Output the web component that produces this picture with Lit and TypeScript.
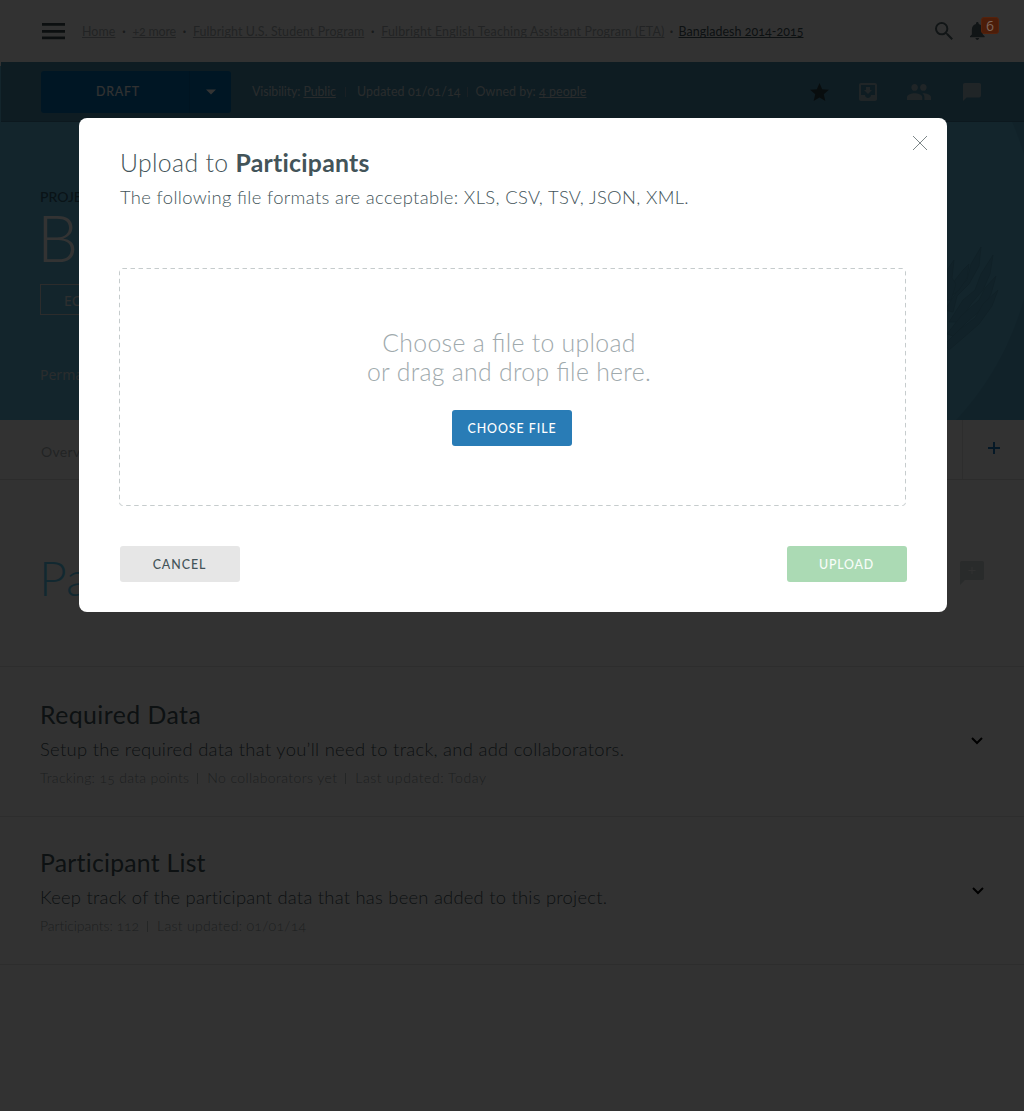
import { LitElement, html, css, svg } from "lit";
import { customElement } from "lit/decorators.js";

interface Crumb { label: string; cls: string; }
interface Section { title: string; titleCls: string; text: string; textCls: string; meta: string[]; cls: string; }

const crumbs: Crumb[] = [
  { label: "Home", cls: "c1" },
  { label: "+2 more", cls: "c2" },
  { label: "Fulbright U.S. Student Program", cls: "c3" },
  { label: "Fulbright English Teaching Assistant Program (ETA)", cls: "c4" },
  { label: "Bangladesh 2014-2015", cls: "c5" },
];

const sections: Section[] = [
  {
    title: "Required Data", titleCls: "t1",
    text: "Setup the required data that you’ll need to track, and add collaborators.", textCls: "d1",
    meta: ["Tracking: 15 data points", "No collaborators yet", "Last updated: Today"], cls: "required",
  },
  {
    title: "Participant List", titleCls: "t2",
    text: "Keep track of the participant data that has been added to this project.", textCls: "d2",
    meta: ["Participants: 112", "Last updated: 01/01/14"], cls: "list",
  },
];

const feathers = [
  "M0 60 L14 38 L22 30 L26 14 L36 -3 L34 16 L24 34 L12 46 L8 62Z",
  "M4 72 L18 50 L30 40 L36 24 L48 5 L45 24 L38 40 L26 54 L14 72Z",
  "M2 84 L16 66 L34 50 L40 38 L51 26 L46 44 L38 58 L22 72 L8 86Z",
  "M0 94 L14 80 L30 68 L38 54 L53 40 L47 56 L34 74 L18 88 L4 100Z",
  "M4 48 L10 30 L18 20 L24 14 L22 28 L14 40Z",
  "M0 50 L2 20 L9 10 L7 28 L11 34 L6 50Z",
];

@customElement("app-root")
export class AppRoot extends LitElement {
  static styles = css`
    :host { display: block; }
    * { box-sizing: border-box; }
    .page {
      position: relative; width: 1024px; height: 1111px; overflow: hidden; background: #fbfbfb;
      font-family: Lato, "Liberation Sans", sans-serif; font-variant-numeric: oldstyle-nums;
      color: #435459; white-space: nowrap;
    }
    svg { display: block; }
    .header { height: 62px; display: flex; align-items: center; padding: 0 26px 0 42px; }
    .crumbs { display: flex; align-items: center; margin-left: 17px; height: 18px; font-size: 12.4px; line-height: 18px; color: #a8b0b2; padding-top: 1px; flex: 1; }
    .crumb { text-decoration: underline; text-decoration-skip-ink: none; text-underline-offset: 1px; }
    .dot { width: 17px; text-align: center; color: #7c8689; font-weight: 700; }
    .dot.last { width: 14px; }
    .c1 { letter-spacing: .1px; } .c2 { letter-spacing: -.16px; } .c3 { letter-spacing: .12px; }
    .c4 { letter-spacing: .195px; } .c5 { letter-spacing: .07px; color: #435459; }
    .tools { display: flex; align-items: center; gap: 17px; }
    .bell { margin-right: 1px; }

    .bar { height: 60px; margin-left: 1px; background: #468caa; border-bottom: 1px solid #3c7896; display: flex; align-items: center; padding: 0 43px 0 40px; color: #f2f5f6; }
    .barwrap { background: linear-gradient(#fbfbfb 4px, #5fb9dc 4px); }
    .draft { width: 190px; height: 42px; border-radius: 3px; background: #006eb4; display: flex; align-items: center; font-size: 12.4px; font-weight: 500; letter-spacing: .8px; }
    .draft-label { width: 149px; height: 42px; line-height: 42px; padding-left: 6px; text-align: center; border-right: 1px solid #0064a5; }
    .draft-arrow { margin-left: 16px; }
    .facts { display: flex; align-items: center; margin-left: 21px; font-size: 12.4px; line-height: 18px; flex: 1; color: #ccd8dc; }
    .facts u { text-decoration-skip-ink: none; text-underline-offset: 1px; }
    .tick { width: 1px; height: 10px; background: #9ab; margin: 0 11px 0 9px; opacity: .7; }
    .tick.b { margin: 0 8px 0 6px; }
    .f1 { letter-spacing: -.1px; } .f2 { letter-spacing: .15px; } .f3 { letter-spacing: .08px; }
    .baricons { display: flex; align-items: center; }
    .baricons .inbox { margin-left: 30px; } .baricons .people { margin-left: 30px; } .baricons .chat { margin-left: 32px; }

    .hero { position: relative; height: 298px; background: #5fb9dc; padding: 67px 40px 0; color: #fff; }
    .decor { position: absolute; right: 0; top: 0; }
    .kicker { font-size: 14px; font-weight: 500; line-height: 16px; color: #2f6074; }
    .name { font-size: 65px; font-weight: 300; line-height: 60px; margin-left: -3px; margin-top: 2px; }
    .tag { width: 120px; height: 31px; margin-top: 17px; border: 1px solid #dcdcdc; padding-left: 23px; font: 400 14px/31px "Noto Sans", sans-serif; color: #e4eaec; }
    .perma { margin-top: 50px; font: 400 14px/20px "Noto Sans", sans-serif; color: #d0dce0; }

    .tabs { height: 60px; border-bottom: 1px solid #dcdcdc; display: flex; padding-left: 41px; font-size: 14px; color: #a9b1b4; letter-spacing: .3px; }
    .tab { flex: 1; line-height: 64px; }
    .add { width: 62px; border-left: 1px solid #e0e0e0; padding: 22px 0 0 25px; }

    .title { height: 187px; border-bottom: 1px solid #dedede; display: flex; justify-content: space-between; padding: 73px 40px 0 39px; }
    .title-text { font-size: 48px; font-weight: 300; line-height: 50px; color: #5cc8f0; }
    .note { margin-top: 8px; }

    .section { display: flex; justify-content: space-between; border-bottom: 1px solid #dedede; padding-left: 40px; }
    .required { height: 150px; padding-top: 33px; padding-right: 41px; }
    .list { height: 148px; padding-top: 31px; padding-right: 40px; }
    .h { font-size: 24.8px; font-weight: 400; line-height: 30px; }
    .t1 { letter-spacing: .46px; } .t2 { letter-spacing: .24px; }
    .p { font-size: 18.4px; font-weight: 300; line-height: 24px; margin-top: 7px; }
    .d1 { letter-spacing: .3px; } .d2 { letter-spacing: .24px; }
    .m { display: flex; align-items: center; margin-top: 7px; font-size: 14px; font-weight: 300; line-height: 20px; color: #8f999c; letter-spacing: .3px; }
    .m .pipe { width: 1px; height: 11px; background: #b4bcbe; margin: 0 9px 0 8px; }
    .m span:nth-of-type(2) { letter-spacing: .4px; } .m span:nth-of-type(3) { letter-spacing: .57px; }
    .list .m span:nth-of-type(1) { letter-spacing: -.05px; } .list .m span:nth-of-type(2) { letter-spacing: .3px; }
    .chev { margin-top: 37px; }
    .list .chev { margin-top: 39px; }

    .overlay { position: absolute; inset: 0; background: rgba(0, 0, 0, .8); padding: 118px 77px 0 79px; }
    .badge { position: absolute; left: 981px; top: 17px; width: 18px; height: 17px; border-radius: 3px; background: #4c1d09; border: 1px solid #55220c; color: #7d675c; font-size: 14px; font-weight: 400; line-height: 16px; text-align: center; font-family: "Open Sans", sans-serif; font-variant-numeric: lining-nums; }
    .modal { position: relative; width: 868px; height: 494px; border-radius: 8px; background: #fff; padding: 30px 40px 0; }
    .close { position: absolute; left: 833px; top: 17px; }
    .mh { font-size: 24.8px; font-weight: 300; line-height: 30px; letter-spacing: .34px; padding-left: 1px; }
    .mh b { font-weight: 700; letter-spacing: .25px; }
    .mp { font-size: 18.4px; font-weight: 300; line-height: 24px; margin-top: 7px; padding-left: 1px; letter-spacing: .34px; font-feature-settings: "liga" 1; }
    .drop { position: relative; width: 787px; height: 238px; margin-top: 59px; padding-top: 60px; display: flex; flex-direction: column; align-items: center; }
    .dash { position: absolute; inset: 0; }
    .ask { font-size: 24.8px; font-weight: 300; line-height: 29px; text-align: center; color: #a0aaad; padding-right: 7px; font-feature-settings: "liga" 1; letter-spacing: .3px; }
    .btn { width: 120px; height: 36px; border-radius: 3px; font-size: 12.4px; line-height: 37px; text-align: center; font-weight: 500; }
    .choose { margin: 24px 1px 0 0; background: #297cb6; color: #fff; letter-spacing: .95px; }
    .foot { display: flex; justify-content: space-between; margin: 40px 0 0 .5px; width: 787px; }
    .cancel { background: #e6e6e6; letter-spacing: .95px; }
    .upload { background: #abdab4; color: #f8fdf9; letter-spacing: .8px; }
  `;

  render() {
    return html`
      <div class="page">
        <div class="header">
          <svg width="23" height="17" viewBox="0 0 23 17" fill="#3c4c50"><path d="M0 0h23v2.7H0zM0 7h23v2.7H0zM0 13.6h23v2.7H0z"/></svg>
          <div class="crumbs">
            ${crumbs.map((c, i) => html`${i ? html`<span class="dot ${i === 4 ? "last" : ""}">·</span>` : ""}<span class="crumb ${c.cls}">${c.label}</span>`)}
          </div>
          <div class="tools">
            <svg width="18" height="18" viewBox="3 3 17.5 17.5" fill="#56686d"><path d="M15.5 14h-.79l-.28-.27A6.47 6.47 0 0 0 16 9.5 6.5 6.5 0 1 0 9.5 16c1.61 0 3.09-.59 4.23-1.57l.27.28v.79l5 4.99L20.49 19l-4.99-5zm-6 0C7.01 14 5 11.99 5 9.5S7.01 5 9.5 5 14 7.01 14 9.5 11.99 14 9.5 14z"/></svg>
            <svg class="bell" width="27" height="18" viewBox="4 2.5 29.5 19.5" fill="#56686d"><path d="M12 22c1.1 0 2-.9 2-2h-4c0 1.1.9 2 2 2zm6-6v-5c0-3.07-1.64-5.64-4.5-6.32V4c0-.83-.67-1.5-1.5-1.5s-1.5.67-1.5 1.5v.68C7.63 5.36 6 7.92 6 11v5l-2 2v1h16v-1l-2-2z"/></svg>
          </div>
        </div>
        <div class="barwrap">
          <div class="bar">
            <div class="draft"><div class="draft-label">DRAFT</div><svg class="draft-arrow" width="10" height="6" viewBox="0 0 10 6"><path d="M0 .5h10L5 5.5z" fill="#fff"/></svg></div>
            <div class="facts">
              <span class="f1">Visibility: <u>Public</u></span><i class="tick"></i>
              <span class="f2">Updated 01/01/14</span><i class="tick b"></i>
              <span class="f3">Owned by: <u>4 people</u></span>
            </div>
            <div class="baricons">
              <svg width="19" height="18" viewBox="2 2 20 19" fill="#2c4048"><path d="M12 17.27L18.18 21l-1.64-7.03L22 9.24l-7.19-.61L12 2 9.19 8.63 2 9.24l5.46 4.73L5.82 21z"/></svg>
              <svg class="inbox" width="18" height="18" viewBox="3 3 18 18" fill="#a0b7c0"><path d="M19 3H5c-1.1 0-2 .9-2 2v14c0 1.1.9 2 2 2h14c1.1 0 2-.9 2-2V5c0-1.1-.9-2-2-2zm0 12h-4c0 1.66-1.35 3-3 3s-3-1.34-3-3H5V5h14v10zm-3-5h-2V7h-4v3H8l4 4 4-4z"/></svg>
              <svg class="people" width="24" height="16" viewBox="1 5 22 14" preserveAspectRatio="none" fill="#a0b7c0"><path d="M16 11c1.66 0 2.99-1.34 2.99-3S17.66 5 16 5s-3 1.34-3 3 1.34 3 3 3zm-8 0c1.66 0 2.99-1.34 2.99-3S9.66 5 8 5 5 6.34 5 8s1.34 3 3 3zm0 2c-2.33 0-7 1.17-7 3.5V19h14v-2.5c0-2.33-4.67-3.5-7-3.5zm8 0c-.29 0-.62.02-.97.05 1.16.84 1.97 1.97 1.97 3.45V19h6v-2.5c0-2.33-4.67-3.5-7-3.5z"/></svg>
              <svg class="chat" width="18" height="18" viewBox="2 2 20 20" fill="#a0b7c0"><path d="M20 2H4c-1.1 0-2 .9-2 2v18l4-4h14c1.1 0 2-.9 2-2V4c0-1.1-.9-2-2-2z"/></svg>
            </div>
          </div>
        </div>
        <div class="hero">
          <svg class="decor" width="90" height="298" viewBox="934 122 90 298">
            <path d="M1012 122A295 295 0 0 1 1024 155V122ZM1024 298A295 295 0 0 1 956 420H1024Z" fill="#57acce"/>
            <g transform="translate(945 250)" fill="#57abcc" stroke="#4f9ebd" stroke-width=".8">${feathers.map((d) => svg`<path d=${d} />`)}</g>
          </svg>
          <div class="kicker">PROJE</div>
          <div class="name">B</div>
          <div class="tag">EC</div>
          <div class="perma">Perma</div>
        </div>
        <div class="tabs">
          <div class="tab">Overv</div>
          <div class="add"><svg width="12" height="12" viewBox="0 0 12 12"><path d="M6 0v12M0 6h12" stroke="#1978be" stroke-width="2"/></svg></div>
        </div>
        <div class="title">
          <div class="title-text">Pa</div>
          <svg class="note" width="24" height="24" viewBox="0 0 24 24"><path d="M1.5 0h21Q24 0 24 1.5v16Q24 19 22.5 19H5L0 24V1.5Q0 0 1.5 0z" fill="#cdd5d5"/><path d="M12 6v7M8.5 9.5h7" stroke="#f4f4f4"/></svg>
        </div>
        ${sections.map((s) => html`
          <div class="section ${s.cls}">
            <div>
              <div class="h ${s.titleCls}">${s.title}</div>
              <div class="p ${s.textCls}">${s.text}</div>
              <div class="m">${s.meta.map((m, i) => html`${i ? html`<i class="pipe"></i>` : ""}<span>${m}</span>`)}</div>
            </div>
            <svg class="chev" width="12" height="8" viewBox="0 0 12 8"><path d="M1 1l5 5 5-5" fill="none" stroke="#000" stroke-width="2"/></svg>
          </div>`)}
        <div class="overlay">
          <div class="badge">6</div>
          <div class="modal">
            <svg class="close" width="16" height="16" viewBox="0 0 16 16"><path d="M1 1l14 14M15 1L1 15" stroke="#7d8789" stroke-width="1"/></svg>
            <div class="mh">Upload to <b>Participants</b></div>
            <div class="mp">The following file formats are acceptable: XLS, CSV, TSV, JSON, XML.</div>
            <div class="drop">
              <svg class="dash" width="787" height="238" viewBox="0 0 787 238"><rect x=".5" y=".5" width="786" height="237" rx="3" fill="none" stroke="#c6cccd" stroke-dasharray="4.5 3.5"/></svg>
              <div class="ask"><div>Choose a file to upload</div><div>or drag and drop file here.</div></div>
              <div class="btn choose">CHOOSE FILE</div>
            </div>
            <div class="foot"><div class="btn cancel">CANCEL</div><div class="btn upload">UPLOAD</div></div>
          </div>
        </div>
      </div>`;
  }
}
